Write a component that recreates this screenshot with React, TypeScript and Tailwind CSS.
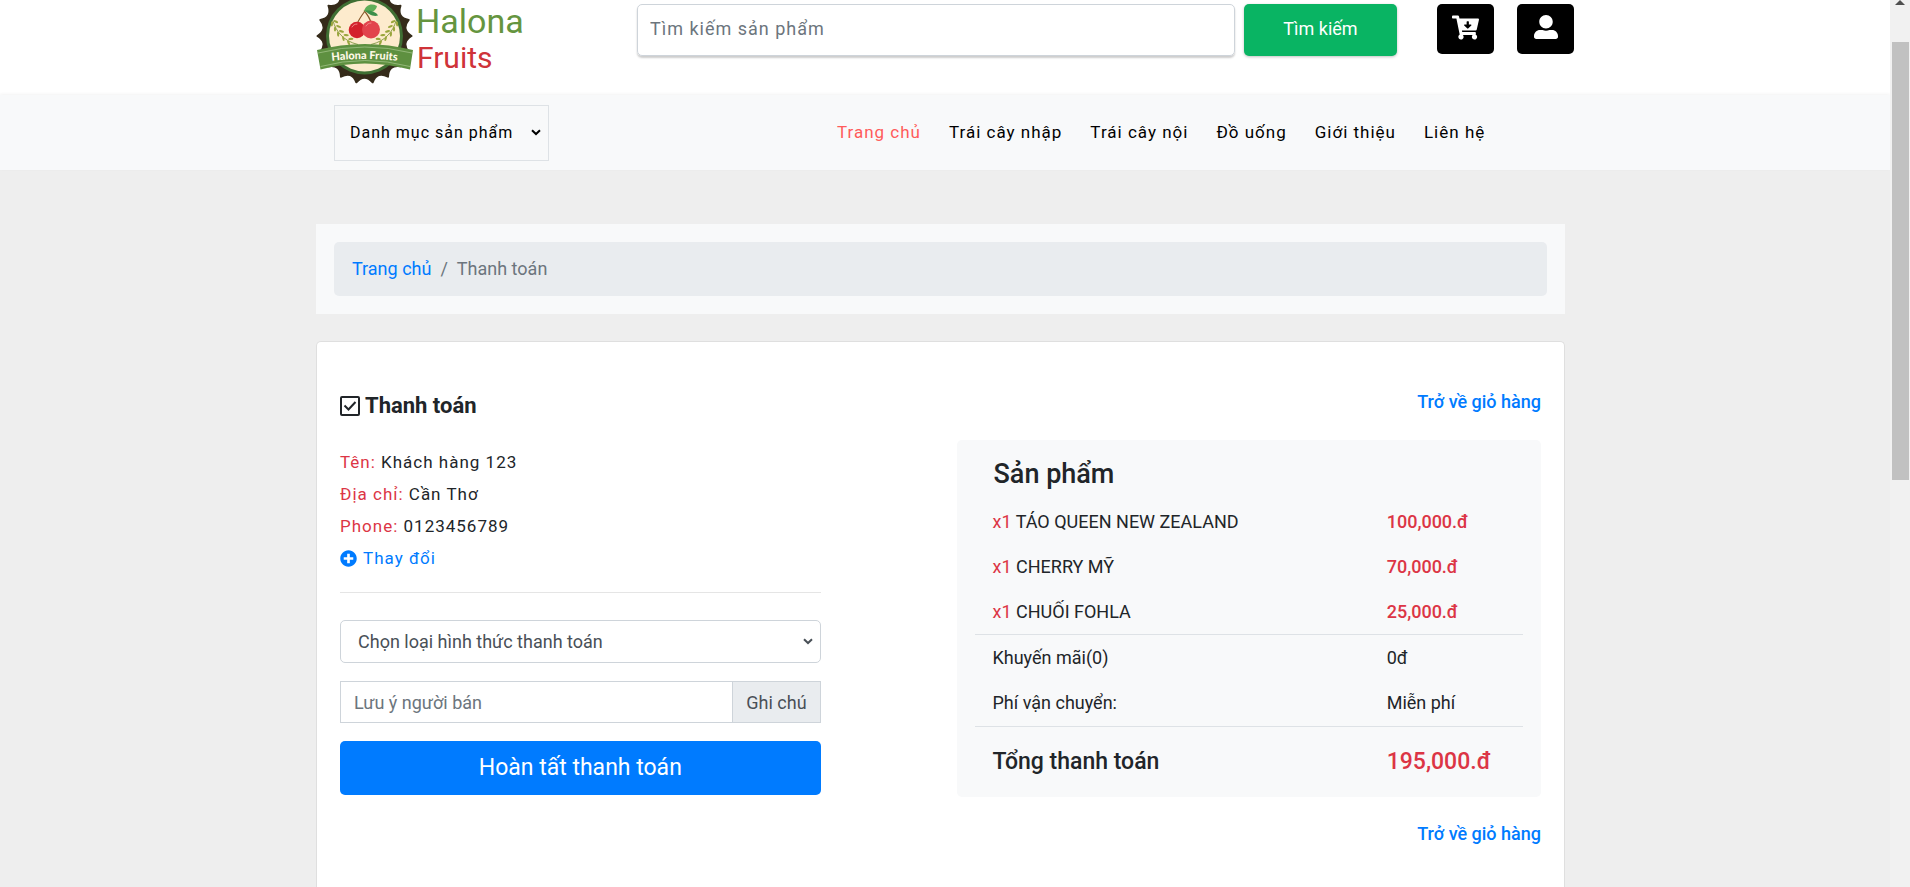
import { FaCartArrowDown, FaPlusCircle, FaUserAlt } from 'react-icons/fa'

const menu = [
  { label: 'Trang chủ', active: true },
  { label: 'Trái cây nhập' },
  { label: 'Trái cây nội' },
  { label: 'Đồ uống' },
  { label: 'Giới thiệu' },
  { label: 'Liên hệ' },
]

const customer = [
  { label: 'Tên:', value: 'Khách hàng 123' },
  { label: 'Địa chỉ:', value: 'Cần Thơ' },
  { label: 'Phone:', value: '0123456789' },
]

const products = [
  { qty: 1, name: 'TÁO QUEEN NEW ZEALAND', price: '100,000.đ' },
  { qty: 1, name: 'CHERRY MỸ', price: '70,000.đ' },
  { qty: 1, name: 'CHUỐI FOHLA', price: '25,000.đ' },
]

const fees = [
  { label: 'Khuyến mãi(0)', value: '0đ' },
  { label: 'Phí vận chuyển:', value: 'Miễn phí' },
]

// Scalloped edge of the badge: 18 tips joined by inward curves
function scallop(cx: number, cy: number) {
  const at = (r: number, deg: number) => {
    const a = (deg * Math.PI) / 180
    return `${(cx + r * Math.cos(a)).toFixed(2)} ${(cy + r * Math.sin(a)).toFixed(2)}`
  }
  let d = `M${at(47, 0)}`
  for (let i = 0; i < 18; i++) {
    d += ` Q${at(37, i * 20 + 10)} ${at(47, i * 20 + 20)}`
  }
  return d + 'Z'
}

const leaves = [
  [18, 23, 60],
  [21, 28, 55],
  [24, 33, 50],
  [29, 37, 40],
  [34, 41, 30],
]

function Branch() {
  return (
    <g>
      <path d="M17 21C20 31 27 41 42 44.5" fill="none" stroke="#6f8a2e" strokeWidth="0.8" />
      {leaves.map(([x, y, r]) => (
        <g key={x} fill="#9aa63c" transform={`translate(${x} ${y}) rotate(${r})`}>
          <ellipse cx="1" cy="-2" rx="2.6" ry="1.1" transform="rotate(-35)" />
          <ellipse cx="1" cy="2" rx="2.6" ry="1.1" transform="rotate(35)" />
        </g>
      ))}
    </g>
  )
}

function Logo() {
  return (
    <svg width="216" height="86" viewBox="0 0 216 86" role="img" aria-label="Halona Fruits">
      <path d={scallop(48.5, 36)} fill="#352b1a" stroke="#352b1a" strokeWidth="2" strokeLinejoin="round" />
      <circle cx="48.5" cy="36" r="38.5" fill="#3f6f33" />
      <circle cx="48.5" cy="36" r="35.5" fill="#fdebcd" />
      <Branch />
      <g transform="translate(97 0) scale(-1 1)">
        <Branch />
      </g>
      <path d="M41 24C43 19 46 15 49 11M55 23C54 18 51 14 48 10.5" fill="none" stroke="#8a5a2b" strokeWidth="1.2" />
      <path d="M48 11C50 5 55 3 61 6C60 11 55 14 48 11Z" fill="#5fae57" />
      <path d="M49 10.5C52 14 57 17 62 15.5C60 11.5 54 10 49 10.5Z" fill="#3d8f4a" />
      <circle cx="41" cy="30" r="8.3" fill="#d3222c" />
      <circle cx="55" cy="29.5" r="9" fill="#e2434c" />
      <path d="M36 27C37 25 39 24 41 24M50 26C51 24 53 23 55 23" fill="none" stroke="#f08a8a" strokeWidth="1" strokeLinecap="round" />
      <path d="M1 50Q48.5 38 97 50L94 69.5Q48.5 57.5 4.5 69.5Z" fill="#5e9040" />
      <path d="M2 53Q48.5 41 96 53M4.5 66.5Q48.5 54.5 94 66.5" fill="none" stroke="#a9c98f" strokeWidth="0.7" />
      <path id="ribbon-line" d="M4 62.5Q48.5 55.5 93 62.5" fill="none" />
      <text className="font-['Lato'] font-black" fontSize="11" fill="#fff8e6">
        <textPath href="#ribbon-line" startOffset="50%" textAnchor="middle">Halona Fruits</textPath>
      </text>
      <text x="100" y="33" fontSize="34" fill="#65953f">Halona</text>
      <text x="101" y="68" fontSize="30" fill="#cf3339">Fruits</text>
    </svg>
  )
}

function Chevron() {
  return (
    <svg className="pointer-events-none col-start-1 row-start-1 mr-2 self-center justify-self-end" width="10" height="7" viewBox="0 0 10 7" fill="none" stroke="currentColor" strokeWidth="2">
      <path d="M1 1.2L5 5L9 1.2" />
    </svg>
  )
}

function CheckSquare() {
  return (
    <svg width="20" height="20" viewBox="0 0 20 20" fill="none" stroke="currentColor" strokeWidth="2" aria-hidden="true">
      <rect x="1" y="1" width="18" height="18" rx="1" />
      <path d="M4.5 9.5L8.5 13.5L15.5 6" />
    </svg>
  )
}

function Scrollbar() {
  return (
    <div className="flex w-5 shrink-0 flex-col items-center bg-[#f1f1f1]" aria-hidden="true">
      <svg width="10" height="5" viewBox="0 0 10 5" fill="#505050">
        <path d="M5 0L10 5H0Z" />
      </svg>
      <div className="mt-[37px] h-[438px] w-[17px] bg-[#c1c1c1]" />
    </div>
  )
}

function Summary() {
  return (
    <div className="rounded-[5px] bg-[#f8f9fa] px-[18px] pt-[18px]">
      <h3 className="mb-[9px] px-[18px] text-[27px] leading-8 font-medium">Sản phẩm</h3>
      <table className="w-full text-left">
        <tbody>
          {products.map((p) => (
            <tr key={p.name} className="h-[45px]">
              <td className="px-[17px]">
                <span className="text-[#dc3545]">x{p.qty}</span> {p.name}
              </td>
              <td className="w-[28%] px-[17px] font-medium text-[#dc3545]">{p.price}</td>
            </tr>
          ))}
        </tbody>
        <tbody className="border-y border-[#dee2e6]">
          {fees.map((f) => (
            <tr key={f.label} className="h-[46px]">
              <td className="px-[17px]">{f.label}</td>
              <td className="px-[17px]">{f.value}</td>
            </tr>
          ))}
        </tbody>
        <tfoot>
          <tr className="h-[71px] text-[23px] font-medium">
            <td className="px-[17px]">Tổng thanh toán</td>
            <td className="px-[17px] text-[#dc3545]">195,000.đ</td>
          </tr>
        </tfoot>
      </table>
    </div>
  )
}

function PaymentForm() {
  return (
    <form className="flex flex-col gap-[18px]">
      <div className="grid text-[#495057]">
        <select aria-label="Hình thức thanh toán" className="col-start-1 row-start-1 h-[43px] appearance-none rounded-[5px] border border-[#ced4da] bg-white px-[17px]">
          <option>Chọn loại hình thức thanh toán</option>
        </select>
        <Chevron />
      </div>
      <div className="flex h-[42px]">
        <input id="note" type="text" placeholder="Lưu ý người bán" className="min-w-0 flex-1 border border-[#ced4da] px-[13px] placeholder:text-[#6c757d]" />
        <label htmlFor="note" className="flex items-center border border-l-0 border-[#ced4da] bg-[#e9ecef] px-[13px] text-[#495057]">Ghi chú</label>
      </div>
      <button type="button" className="h-[54px] rounded-[5px] bg-[#007bff] pb-[2px] text-[23px] text-white">Hoàn tất thanh toán</button>
    </form>
  )
}

export default function App() {
  return (
    <div className="flex min-h-screen bg-[#eeeeee] font-['Roboto',sans-serif] text-[18px] leading-[27px] text-[#212529]">
      <div className="flex min-w-0 flex-1 flex-col">
        <header className="bg-white">
          <div className="mx-auto flex h-[95px] w-full max-w-[1258px] items-start">
            <a href="#" className="w-[321px]"><Logo /></a>
            <form className="flex flex-1 gap-[9px] pt-1">
              <input type="text" aria-label="Tìm kiếm" placeholder="Tìm kiếm sản phẩm" className="h-[52px] min-w-0 flex-1 rounded-[5px] border border-[#ced4da] px-3 pb-1 tracking-[1px] shadow-[0_2px_2px_rgba(0,0,0,0.2)] placeholder:text-[#6c757d]" />
              <button type="button" className="h-[52px] w-[153px] rounded-[5px] bg-[#09b463] pb-1 text-white shadow-[0_1px_3px_rgba(0,0,0,0.25)]">Tìm kiếm</button>
            </form>
            <div className="flex gap-[23px] pt-1 pl-10 text-white">
              <button type="button" aria-label="Giỏ hàng" className="flex h-[50px] w-[57px] items-center justify-center rounded-[5px] bg-black pb-1">
                <FaCartArrowDown size={27} />
              </button>
              <button type="button" aria-label="Tài khoản" className="flex h-[50px] w-[57px] items-center justify-center rounded-[5px] bg-black pb-1">
                <FaUserAlt size={24} />
              </button>
            </div>
          </div>
        </header>

        <div className="bg-[#f8f9fa] text-[17px] tracking-[1px] text-black shadow-[0_-1px_3px_rgba(0,0,0,0.05)]">
          <div className="mx-auto flex h-[75px] w-full max-w-[1258px] items-center">
            <div className="w-[521px] pl-[18px]">
              <div className="grid w-[215px]">
                <select aria-label="Danh mục" className="col-start-1 row-start-1 h-14 appearance-none border border-[#dee2e6] pl-[15px] text-[16px] tracking-[1px]">
                  <option>Danh mục sản phẩm</option>
                </select>
                <Chevron />
              </div>
            </div>
            <nav className="flex gap-7">
              {menu.map((m) => (
                <a key={m.label} href="#" className={m.active ? 'text-[#ff5b5b]' : ''}>{m.label}</a>
              ))}
            </nav>
          </div>
        </div>

        <main className="mx-auto flex w-full max-w-[1258px] flex-1 flex-col pt-[54px] pr-[9px]">
          <nav aria-label="breadcrumb" className="bg-[#f8f9fa] p-[18px]">
            <ol className="flex gap-[9px] rounded-[5px] bg-[#e9ecef] px-[18px] py-[14px] leading-[26px] text-[#6c757d]">
              <li><a href="#" className="text-[#007bff]">Trang chủ</a></li>
              <li aria-hidden="true">/</li>
              <li>Thanh toán</li>
            </ol>
          </nav>

          <section className="mt-[27px] grid flex-1 grid-cols-12 content-start gap-x-[34px] rounded-t-[5px] border border-b-0 border-[#dfdfdf] bg-white px-[23px] pt-[46px]">
            <div className="col-span-5 pt-1">
              <h2 className="flex items-center gap-[5px] text-[22px] font-bold"><CheckSquare />Thanh toán</h2>
              <div className="mt-[27px] text-[17px] leading-8 tracking-[1px]">
                {customer.map((c) => (
                  <p key={c.label}><span className="text-[#dc3545]">{c.label}</span> {c.value}</p>
                ))}
                <a href="#" className="flex items-center gap-[6px] text-[#007bff]"><FaPlusCircle size={17} />Thay đổi</a>
              </div>
              <hr className="mt-[18px] mb-[27px] border-[#e5e5e5]" />
              <PaymentForm />
            </div>
            <div className="col-span-6 col-start-7">
              <div className="text-right font-medium text-[#007bff]"><a href="#">Trở về giỏ hàng</a></div>
              <div className="mt-[25px] mb-[23px]"><Summary /></div>
              <div className="text-right font-medium text-[#007bff]"><a href="#">Trở về giỏ hàng</a></div>
            </div>
          </section>
        </main>
      </div>
      <Scrollbar />
    </div>
  )
}
